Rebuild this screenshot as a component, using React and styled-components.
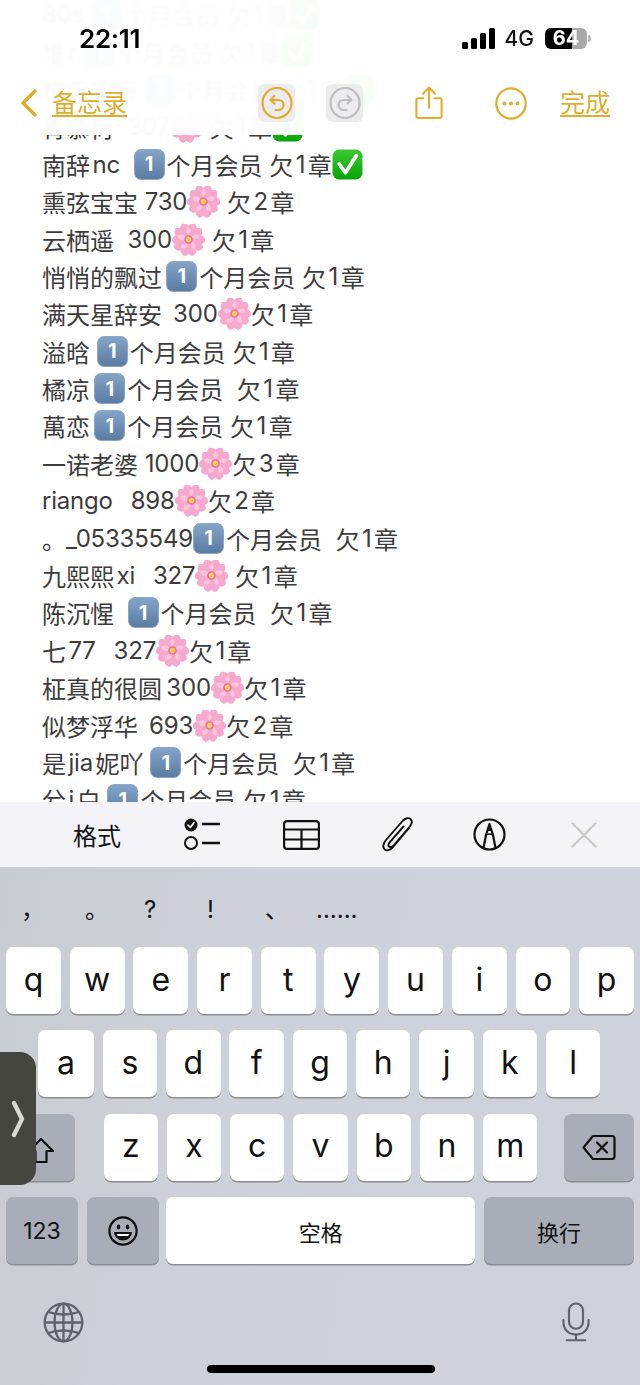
import styled, { createGlobalStyle } from 'styled-components';

const lines = [
  '80s #个月会员 欠1章+',
  '堆r #个月会员 欠1章+',
  '枸忠实呀 #个月会员 欠1章+',
  '青慕荷  307* 欠1章+',
  '南辞nc  #个月会员 欠1章+',
  '熏弦宝宝 730* 欠2章',
  '云栖遥  300* 欠1章',
  '悄悄的飘过\u2009#个月会员 欠1章',
  '满天星辞安 \u2009300*欠1章',
  '溢晗 #个月会员 欠1章',
  '橘凉\u2009#个月会员  欠1章',
  '萬恋\u2009#个月会员 欠1章',
  '一诺老婆 1000*欠3章',
  'riango  \u2009898*欠2章',
  '。_05335549#个月会员  欠1章',
  '九熙熙xi  \u2009327* 欠1章',
  '陈沉惺  #个月会员  欠1章',
  '七77  \u2009327*欠1章',
  '柾真的很圆\u2009300*欠1章',
  '似梦浮华 \u2009693*欠2章',
  '是jia妮吖 #个月会员  欠1章',
  '兮j白 #个月会员 欠1章',
];

const suggestions = [
  ['，', 21],
  ['。', 85],
  ['?', 144],
  ['!', 207],
  ['、', 265],
  ['......', 316],
];

const GlobalStyle = createGlobalStyle`
  html, body { margin: 0; padding: 0; background: #fff; }
  * { box-sizing: border-box; }
`;

const Phone = styled.div`
  position: relative;
  width: 640px;
  height: 1385px;
  overflow: hidden;
  display: flex;
  flex-direction: column;
  font-family: Inter, "Noto Sans CJK SC", sans-serif;
`;

const Note = styled.div`
  height: 802px;
  overflow: hidden;
  padding-left: 42px;
  background: #fff;
`;

const Line = styled.div`
  display: flex;
  align-items: center;
  height: 37.4px;
  font-size: 24px;
  color: #3c3c3c;
  white-space: pre;
  &:first-child { margin-top: -4px; }
`;

const Latin = styled.span`
  letter-spacing: -0.2px;
  margin-left: ${(p) => (p.$before ? 2.5 : 0)}px;
  margin-right: ${(p) => (p.$after ? 2.5 : 0)}px;
`;

const Keycap = styled.span`
  display: inline-flex;
  align-items: center;
  justify-content: center;
  flex: none;
  width: 31px;
  height: 31px;
  margin-right: 2px;
  border-radius: 7px;
  background: linear-gradient(180deg, #83a3c8, #5b7ba1);
  border: 1px solid #8ca8c8;
  color: #fff;
  font-size: 20px;
  font-weight: 700;
`;

const TopOverlay = styled.div`
  position: absolute;
  top: 0;
  left: 0;
  width: 640px;
  height: 135px;
  background: rgba(255, 255, 255, 0.965);
  backdrop-filter: blur(1.5px);
`;

const StatusBar = styled.div`
  display: flex;
  align-items: center;
  height: 76px;
  padding: 0 53px 0 79px;
`;

const Time = styled.span`
  font-size: 26px;
  font-weight: 600;
  color: #000;
  letter-spacing: -0.3px;
  flex: 1;
`;

const Network = styled.span`
  font-size: 21px;
  font-weight: 500;
  color: #111;
  margin: 0 11px 0 10px;
`;

const Battery = styled.span`
  position: relative;
  display: inline-flex;
  align-items: center;
  justify-content: center;
  width: 42px;
  height: 21px;
  border-radius: 6px;
  background: linear-gradient(90deg, #000 64%, #a9a9a9 64%);
  color: #fff;
  font-size: 20px;
  font-weight: 700;
  &::after {
    content: '';
    position: absolute;
    right: -4px;
    top: 7px;
    width: 3px;
    height: 7px;
    border-radius: 0 3px 3px 0;
    background: #b5b5b5;
  }
`;

const NavBar = styled.div`
  display: flex;
  align-items: center;
  height: 46px;
  margin-top: 4px;
  padding-left: 20px;
  color: #e0ac2c;
`;

const NavLink = styled.span`
  font-size: 25px;
  line-height: 32px;
  text-decoration: underline;
  text-underline-offset: 3px;
  text-decoration-thickness: 2px;
  margin-left: ${(p) => p.$left}px;
`;

const NavIcon = styled.span`
  display: inline-flex;
  align-items: center;
  justify-content: center;
  flex: none;
  margin-left: ${(p) => p.$left}px;
  width: ${(p) => p.$w}px;
  height: 38px;
  border-radius: 6px;
  background: ${(p) => (p.$tile ? '#ececee' : 'transparent')};
`;

const Toolbar = styled.div`
  display: flex;
  align-items: center;
  height: 65px;
  background: #f3f3f8;
  padding-left: 73px;
  color: #111;
`;

const FormatLabel = styled.span`
  font-size: 24px;
  color: #111;
  width: 49px;
  flex: none;
`;

const ToolIcon = styled.span`
  display: inline-flex;
  flex: none;
  margin-left: ${(p) => p.$left}px;
`;

const Keyboard = styled.div`
  flex: 1;
  display: flex;
  flex-direction: column;
  position: relative;
  background: linear-gradient(100deg, #c8cbd1 0%, #ced1d9 35%, #cfd2da 100%);
`;

const SuggestionBar = styled.div`
  position: relative;
  height: 80px;
  font-size: 24px;
  color: #111;
`;

const Suggestion = styled.span`
  position: absolute;
  top: 25px;
  left: ${(p) => p.$left}px;
  line-height: 36px;
`;

const Rows = styled.div`
  display: flex;
  flex-direction: column;
  gap: 16.4px;
`;

const KeyRow = styled.div`
  display: flex;
  height: 67px;
  gap: 8.8px;
  padding: 0 ${(p) => p.$pad || 6}px;
  justify-content: ${(p) => (p.$between ? 'space-between' : 'flex-start')};
`;

const KeyGroup = styled.div`
  display: flex;
  gap: 8.8px;
  width: 434px;
  margin-left: 2px;
`;

const Key = styled.div`
  display: flex;
  align-items: center;
  justify-content: center;
  flex: ${(p) => (p.$w ? `0 0 ${p.$w}px` : '1 1 0')};
  background: ${(p) => (p.$dark ? '#a9adb8' : '#fff')};
  border-radius: 7px;
  box-shadow: 0 1.5px 0 #8b8d92;
  font-size: ${(p) => p.$size || 32}px;
  color: #111;
  padding-bottom: ${(p) => (p.$size ? 0 : 3)}px;
`;

const SpaceKey = styled(Key)`
  margin-left: -1.5px;
`;

const ShiftKey = styled(Key)`
  padding-top: 6px;
`;

const BottomIcons = styled.div`
  display: flex;
  justify-content: space-between;
  align-items: center;
  padding: 37px 50px 0 43px;
`;

const HomeBar = styled.div`
  position: absolute;
  left: 207px;
  bottom: 12px;
  width: 228px;
  height: 8px;
  border-radius: 4px;
  background: #000;
`;

const SideHandle = styled.div`
  position: absolute;
  left: 0;
  top: 1052px;
  width: 36px;
  height: 133px;
  border-radius: 0 16px 16px 0;
  background: #45463f;
  display: flex;
  align-items: center;
  justify-content: center;
`;

const isCjk = (ch) => !!ch && /[\u4e00-\u9fff]/.test(ch);

function Blossom() {
  return (
    <svg width="33" height="33" viewBox="0 0 32 32" style={{ flex: 'none' }}>
      {[0, 72, 144, 216, 288].map((a) => (
        <g key={a} transform={`rotate(${a} 16 16)`}>
          <path d="M16 17 C8 14 6 6 9.5 1 C12 0.2 14.5 0.8 16 3 C17.5 0.8 20 0.2 22.5 1 C26 6 24 14 16 17 Z" fill="#f7a9cd" />
          <path d="M16 15 C12.5 11 12.5 7 16 4.5 C19.5 7 19.5 11 16 15 Z" fill="#fbc6de" />
        </g>
      ))}
      <circle cx="16" cy="16" r="4.2" fill="#ee6fa2" />
      <circle cx="16" cy="16" r="2.6" fill="#f8d24e" />
    </svg>
  );
}

function CheckBox() {
  return (
    <svg width="31" height="31" viewBox="0 0 30 30" style={{ flex: 'none' }}>
      <defs>
        <linearGradient id="checkFill" x1="0" y1="0" x2="0" y2="1">
          <stop offset="0" stopColor="#3cc832" />
          <stop offset="1" stopColor="#05a506" />
        </linearGradient>
      </defs>
      <rect x="0.5" y="0.5" width="29" height="29" rx="6.5" fill="url(#checkFill)" />
      <path d="M7 14.5 L13 23 L23.5 6.5" fill="none" stroke="#fff" strokeWidth="3.6" strokeLinejoin="round" strokeLinecap="round" />
    </svg>
  );
}

function TextRun({ text }) {
  const runs = text.split(/([A-Za-z0-9_]+)/).filter(Boolean);
  return runs.map((run, i) => {
    if (!/^[A-Za-z0-9_]+$/.test(run)) return <span key={i}>{run}</span>;
    const prev = runs[i - 1];
    const next = runs[i + 1];
    return (
      <Latin key={i} $before={isCjk(prev && prev[prev.length - 1])} $after={isCjk(next && next[0])}>
        {run}
      </Latin>
    );
  });
}

function LineText({ text }) {
  const parts = text.split(/([#*+])/).filter(Boolean);
  return (
    <Line>
      {parts.map((part, i) => {
        if (part === '#') return <Keycap key={i}>1</Keycap>;
        if (part === '*') return <Blossom key={i} />;
        if (part === '+') return <CheckBox key={i} />;
        return <TextRun key={i} text={part} />;
      })}
    </Line>
  );
}

function SignalBars() {
  return (
    <svg width="33" height="21" viewBox="0 0 33 21" fill="#000">
      <rect x="0" y="14" width="6" height="7" rx="1.5" />
      <rect x="9" y="10" width="6" height="11" rx="1.5" />
      <rect x="18" y="5" width="6" height="16" rx="1.5" />
      <rect x="27" y="0" width="6" height="21" rx="1.5" />
    </svg>
  );
}

function UndoIcon({ color, flip }) {
  return (
    <svg width="32" height="32" viewBox="0 0 32 32" fill="none" stroke={color} strokeWidth="2.2" strokeLinecap="round" strokeLinejoin="round">
      <ellipse cx="16" cy="16" rx="14.5" ry="15" />
      <g transform={flip ? 'matrix(-1 0 0 1 32 0)' : undefined}>
        <path d="M13.5 9 L9.5 13 L13.5 16.5" />
        <path d="M10 13 H17 C21 13 22.5 15.5 22.5 18 C22.5 21 20 23 17 23 H14.5" />
      </g>
    </svg>
  );
}

function ShareIcon() {
  return (
    <svg width="28" height="36" viewBox="0 0 30 36" fill="none" stroke="#e0ac2c" strokeWidth="2.2" strokeLinecap="round" strokeLinejoin="round">
      <path d="M9 13 H3.5 C2.2 13 1.5 13.8 1.5 15 V32 C1.5 33.3 2.2 34 3.5 34 H26.5 C27.8 34 28.5 33.3 28.5 32 V15 C28.5 13.8 27.8 13 26.5 13 H21" />
      <path d="M15 23 V2" />
      <path d="M8.5 8 L15 1.5 L21.5 8" />
    </svg>
  );
}

function MoreIcon() {
  return (
    <svg width="32" height="33" viewBox="0 0 32 33" fill="none" stroke="#e0ac2c" strokeWidth="2.2">
      <ellipse cx="16" cy="16.5" rx="14.7" ry="15.2" />
      <circle cx="9.5" cy="16.5" r="1.9" fill="#e0ac2c" stroke="none" />
      <circle cx="16" cy="16.5" r="1.9" fill="#e0ac2c" stroke="none" />
      <circle cx="22.5" cy="16.5" r="1.9" fill="#e0ac2c" stroke="none" />
    </svg>
  );
}

function ChecklistIcon() {
  return (
    <svg width="37" height="33" viewBox="0 0 37 33" fill="none" stroke="#111" strokeWidth="2">
      <circle cx="7" cy="7" r="6.5" fill="#111" stroke="none" />
      <path d="M4 7 L6.3 9.5 L10 4.5" stroke="#fff" strokeWidth="1.6" strokeLinecap="round" strokeLinejoin="round" />
      <circle cx="7" cy="25" r="6" />
      <path d="M18 6 H36 M18 25 H36" strokeWidth="2.4" />
    </svg>
  );
}

function TableIcon() {
  return (
    <svg width="37" height="30" viewBox="0 0 37 30" fill="none" stroke="#111" strokeWidth="2.2">
      <rect x="1.1" y="1.1" width="34.8" height="27.8" rx="3" />
      <path d="M1 9.5 H36 M1 19.5 H36 M18.5 9.5 V29" />
    </svg>
  );
}

function ClipIcon() {
  return (
    <svg width="31" height="35" viewBox="0 0 31 35" fill="none" stroke="#111" strokeWidth="1.9" strokeLinecap="round" strokeLinejoin="round">
      <path d="M27 11 L11.5 29.5 C8.5 33.5 4 34.5 2.3 32 C0.5 29.5 1.5 26 4 23 L21 3.5 C23.5 0.8 27 0.5 28.8 2.3 C30.5 4.2 29.8 7 27.8 9.5 L12 28 C10.3 30 8 30.5 7 29.5 C6 28.5 6.5 26.5 8 24.8 L21.5 9.5" />
    </svg>
  );
}

function PenIcon() {
  return (
    <svg width="33" height="33" viewBox="0 0 33 33" fill="none" stroke="#111" strokeWidth="2.2" strokeLinejoin="round">
      <circle cx="16.5" cy="16.5" r="15" />
      <path d="M10.5 30 L13 17 L16.5 6 L20 17 L22.5 30" />
      <path d="M13 17 Q16.5 15 20 17" strokeWidth="1.6" />
      <path d="M14.2 13 L16.5 6 L18.8 13 Z" fill="#111" stroke="none" />
    </svg>
  );
}

function CloseIcon() {
  return (
    <svg width="26" height="26" viewBox="0 0 26 26" fill="none" stroke="#c9c9cd" strokeWidth="2.4" strokeLinecap="round">
      <path d="M1.5 1.5 L24.5 24.5 M24.5 1.5 L1.5 24.5" />
    </svg>
  );
}

function ShiftIcon() {
  return (
    <svg width="28" height="27" viewBox="0 0 28 27" fill="none" stroke="#111" strokeWidth="2.2" strokeLinejoin="round">
      <path d="M14 2 L26 14 H19.5 V25 H8.5 V14 H2 Z" />
    </svg>
  );
}

function DeleteIcon() {
  return (
    <svg width="34" height="27" viewBox="0 0 34 27" fill="none" stroke="#111" strokeWidth="2.2" strokeLinecap="round" strokeLinejoin="round">
      <path d="M11 2 H30 C31.5 2 32.5 3 32.5 4.5 V22.5 C32.5 24 31.5 25 30 25 H11 L1.5 13.5 Z" />
      <path d="M15 8.5 L25 18.5 M25 8.5 L15 18.5" />
    </svg>
  );
}

function EmojiIcon() {
  return (
    <svg width="30" height="30" viewBox="0 0 30 30" fill="none" stroke="#111" strokeWidth="2.2">
      <circle cx="15" cy="15" r="13.6" />
      <ellipse cx="10.5" cy="11" rx="1.8" ry="2.4" fill="#111" stroke="none" />
      <ellipse cx="19.5" cy="11" rx="1.8" ry="2.4" fill="#111" stroke="none" />
      <path d="M6 16 H24 C23.5 21.5 19.5 24.5 15 24.5 C10.5 24.5 6.5 21.5 6 16 Z" fill="#111" stroke="none" />
      <path d="M8.5 18 H21.5 C21 19 20.5 19.5 20 20 H10 C9.5 19.5 9 19 8.5 18 Z" fill="#fff" stroke="none" />
    </svg>
  );
}

function GlobeIcon() {
  return (
    <svg width="41" height="41" viewBox="0 0 41 41" fill="none" stroke="#5e636c" strokeWidth="2.3">
      <circle cx="20.5" cy="20.5" r="18.8" />
      <ellipse cx="20.5" cy="20.5" rx="9" ry="18.8" />
      <path d="M20.5 1.7 V39.3 M1.7 20.5 H39.3" />
      <path d="M5 10 Q20.5 15 36 10 M5 31 Q20.5 26 36 31" />
    </svg>
  );
}

function MicIcon() {
  return (
    <svg width="28" height="42" viewBox="0 0 30 42" fill="none" stroke="#5e636c" strokeWidth="2.3" strokeLinecap="round">
      <rect x="7.5" y="1.2" width="15" height="27" rx="7.5" />
      <path d="M1.5 19 V21 C1.5 29 7 34.5 15 34.5 C23 34.5 28.5 29 28.5 21 V19" />
      <path d="M15 34.5 V40.5 M5 40.5 H25" />
    </svg>
  );
}

export default function App() {
  return (
    <Phone>
      <GlobalStyle />
      <Note>
        {lines.map((text) => (
          <LineText key={text} text={text} />
        ))}
      </Note>

      <TopOverlay>
        <StatusBar>
          <Time>22:11</Time>
          <SignalBars />
          <Network>4G</Network>
          <Battery>64</Battery>
        </StatusBar>
        <NavBar>
          <svg width="17" height="28" viewBox="0 0 17 28" fill="none" stroke="#e0ac2c" strokeWidth="3.4" strokeLinecap="round" strokeLinejoin="round">
            <path d="M15 2 L3 14 L15 26" />
          </svg>
          <NavLink $left={15}>备忘录</NavLink>
          <NavIcon $left={131} $w={37} $tile>
            <UndoIcon color="#e0ac2c" />
          </NavIcon>
          <NavIcon $left={31} $w={37} $tile>
            <UndoIcon color="#bdbdbd" flip />
          </NavIcon>
          <NavIcon $left={52} $w={28}>
            <ShareIcon />
          </NavIcon>
          <NavIcon $left={51} $w={33}>
            <MoreIcon />
          </NavIcon>
          <NavLink $left={33}>完成</NavLink>
        </NavBar>
      </TopOverlay>

      <Toolbar>
        <FormatLabel>格式</FormatLabel>
        <ToolIcon $left={62}><ChecklistIcon /></ToolIcon>
        <ToolIcon $left={62}><TableIcon /></ToolIcon>
        <ToolIcon $left={62}><ClipIcon /></ToolIcon>
        <ToolIcon $left={60}><PenIcon /></ToolIcon>
        <ToolIcon $left={65}><CloseIcon /></ToolIcon>
      </Toolbar>

      <Keyboard>
        <SuggestionBar>
          {suggestions.map(([s, left]) => (
            <Suggestion key={s} $left={left}>{s}</Suggestion>
          ))}
        </SuggestionBar>
        <Rows>
          <KeyRow>
            {'qwertyuiop'.split('').map((k) => <Key key={k}>{k}</Key>)}
          </KeyRow>
          <KeyRow $pad={38}>
            <Key $w={56}>a</Key>
            {'sdfghjkl'.split('').map((k) => <Key key={k} $w={54.5}>{k}</Key>)}
          </KeyRow>
          <KeyRow $between>
            <ShiftKey $w={69} $dark $size={24}><ShiftIcon /></ShiftKey>
            <KeyGroup>
              {'zxcvbnm'.split('').map((k) => <Key key={k}>{k}</Key>)}
            </KeyGroup>
            <Key $w={70} $dark $size={24}><DeleteIcon /></Key>
          </KeyRow>
          <KeyRow>
            <Key $w={72} $dark $size={23}>123</Key>
            <Key $w={72} $dark $size={24}><EmojiIcon /></Key>
            <SpaceKey $size={22}>空格</SpaceKey>
            <Key $w={150} $dark $size={22}>换行</Key>
          </KeyRow>
        </Rows>
        <BottomIcons>
          <GlobeIcon />
          <MicIcon />
        </BottomIcons>
        <HomeBar />
      </Keyboard>

      <SideHandle>
        <svg width="14" height="38" viewBox="0 0 14 38" fill="none" stroke="#d8d8d4" strokeWidth="4.4" strokeLinecap="round" strokeLinejoin="round">
          <path d="M3 3 L11 19 L3 35" />
        </svg>
      </SideHandle>
    </Phone>
  );
}
